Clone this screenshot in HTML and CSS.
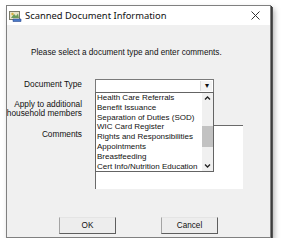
FILE: index.html
```html
<!DOCTYPE html>
<html lang="en">
<head>
  <meta charset="UTF-8">
  <title>Scanned Document Information</title>
  <link rel="stylesheet" href="styles.css">
</head>
<body>
  <div class="window">
    <div class="titlebar">
      <svg class="app-icon" width="13" height="12" viewBox="0 0 13 12">
        <rect x="0.5" y="1.5" width="10" height="8" fill="#e8e4c8" stroke="#7a7a6a"/>
        <path d="M2 8 L5 4 L7 6 L9 3.5 L10 8 Z" fill="#6a9a5a"/>
        <circle cx="3.5" cy="4" r="1.2" fill="#d8b040"/>
        <path d="M4 9 L12 9 L12 11.5 L4 11.5 Z" fill="#4a7ac8" stroke="#2a4a90" stroke-width="0.6"/>
      </svg>
      <span class="title">Scanned Document Information</span>
      <svg class="close" width="9" height="9" viewBox="0 0 9 9">
        <path d="M0.5 0.5 L8.5 8.5 M8.5 0.5 L0.5 8.5" stroke="#333" stroke-width="1"/>
      </svg>
    </div>
    <div class="client">
      <p class="prompt">Please select a document type and enter comments.</p>
      <div class="form">
        <label class="lbl">Document Type</label>
        <div class="combo-wrap">
          <div class="combo">
            <span class="combo-btn">&#x25BE;</span>
          </div>
          <div class="droplist">
            <ul class="items">
              <li>Health Care Referrals</li>
              <li>Benefit Issuance</li>
              <li>Separation of Duties (SOD)</li>
              <li>WIC Card Register</li>
              <li>Rights and Responsibilities</li>
              <li>Appointments</li>
              <li>Breastfeeding</li>
              <li>Cert Info/Nutrition Education</li>
            </ul>
            <div class="scrollbar">
              <svg class="sb-arrow" width="11" height="11" viewBox="0 0 11 11">
                <path d="M3 6.5 L5.5 4 L8 6.5" fill="none" stroke="#222" stroke-width="1.3"/>
              </svg>
              <span class="sb-track"><span class="sb-thumb"></span></span>
              <svg class="sb-arrow" width="11" height="11" viewBox="0 0 11 11">
                <path d="M3 4.5 L5.5 7 L8 4.5" fill="none" stroke="#222" stroke-width="1.3"/>
              </svg>
            </div>
          </div>
        </div>
        <label class="lbl lbl-two">Apply to additional<br>household members</label>
        <div class="spacer"></div>
        <label class="lbl lbl-comments">Comments</label>
        <div class="comments"></div>
      </div>
      <div class="buttons">
        <button class="btn">OK</button>
        <button class="btn">Cancel</button>
      </div>
    </div>
  </div>
</body>
</html>
```

FILE: styles.css
```css
body { margin: 0; background: #fff; font-family: "Liberation Sans", Arial, sans-serif; }
.window {
  margin: 5px 0 0 6px;
  width: 263px; height: 231px;
  border: 1px solid #808080;
  background: #f0f0f0;
  box-shadow: 1px 1px 0 #3c3c3c, 2px 2px 0 #555, 3px 4px 6px rgba(0,0,0,0.35);
  display: flex; flex-direction: column;
}
.titlebar {
  height: 19px; background: #fff;
  display: flex; align-items: center;
  padding: 0 6px 0 2px;
}
.app-icon { margin-right: 3px; }
.title { font-family: "Noto Sans", sans-serif; font-size: 9.4px; color: #111; flex: 1; }
.close { margin-right: 4px; }
.client { flex: 1; display: flex; flex-direction: column; font-size: 8.3px; color: #111; }
.prompt { margin: 23px 0 0 24px; font-size: 8.2px; }
.form {
  display: grid;
  grid-template-columns: 82px 148px;
  column-gap: 13px;
  margin: 22px 0 0 -7px;
  align-items: start;
}
.lbl { text-align: right; white-space: nowrap; }
.lbl-two { margin-top: 7px; line-height: 9px; }
.lbl-comments { margin-top: 11px; }
.combo-wrap { position: relative; width: 119px; }
.combo {
  height: 12px; background: #fff;
  border: 1px solid #7a7a7a;
  display: flex; justify-content: flex-end;
}
.combo-btn {
  width: 11px; height: 10px; margin: 1px;
  font-size: 8px; line-height: 10px; text-align: center;
  background: #f4f4f4; border-left: 1px solid #dcdcdc;
}
.droplist {
  position: absolute; top: 13px; left: 0; z-index: 2;
  width: 117px; height: 78px;
  background: #fff; border: 1px solid #646464;
  display: flex;
}
.items { list-style: none; margin: 0; padding: 0 0 0 1px; flex: 1; line-height: 9.8px; font-size: 8px; white-space: nowrap; overflow: hidden; }
.scrollbar { width: 11px; display: flex; flex-direction: column; background: #f0f0f0; }
.sb-arrow { display: block; }
.sb-track { flex: 1; position: relative; }
.sb-thumb { position: absolute; left: 0; right: 0; top: 22px; height: 21px; background: #c2c2c2; }
.spacer { height: 20px; }
.comments {
  margin-top: 7px;
  height: 63px;
  background: #fff;
  border-top: 1px solid #6a6a6a; border-left: 1px solid #6a6a6a;
}
.buttons { display: flex; gap: 45px; margin: 28px 0 0 52px; }
.btn {
  width: 57px; height: 17px; padding: 0;
  font-family: "Liberation Sans", Arial, sans-serif; font-size: 8.2px; color: #111;
  background: #ededed;
  border: 1px solid; border-color: #e4e4e4 #5e5e5e #5e5e5e #a4a4a4;
}
```
